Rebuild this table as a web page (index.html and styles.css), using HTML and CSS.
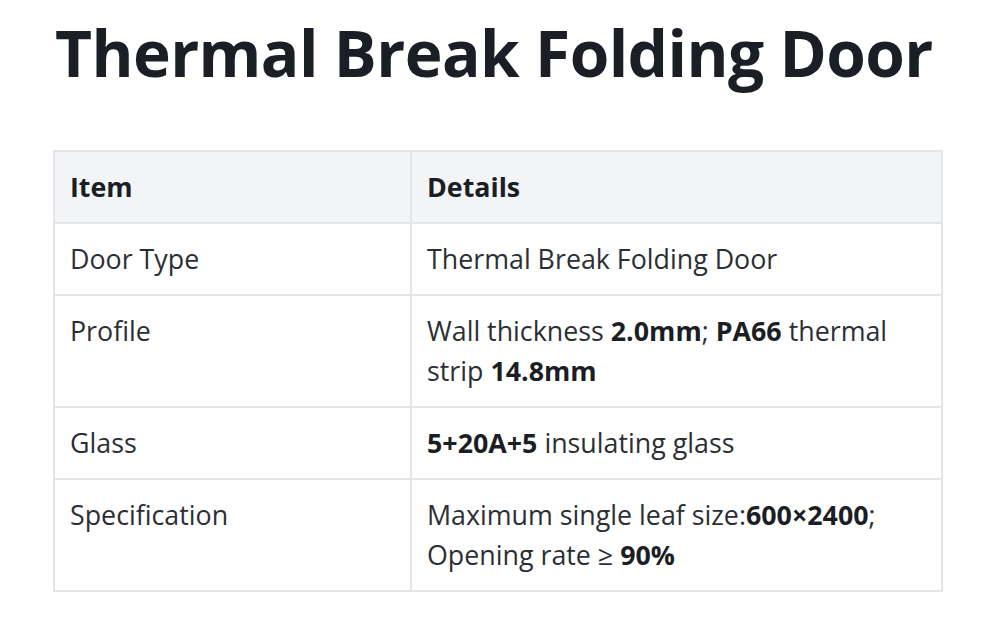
FILE: index.html
```html
<!DOCTYPE html>
<html lang="en">
<head>
<meta charset="utf-8">
<title>Thermal Break Folding Door</title>
<link rel="stylesheet" href="styles.css">
</head>
<body>
<main class="page">
  <h1 class="title">Thermal Break Folding Door</h1>
  <table class="spec">
    <thead>
      <tr><th class="col-item">Item</th><th>Details</th></tr>
    </thead>
    <tbody>
      <tr><td>Door Type</td><td>Thermal Break Folding Door</td></tr>
      <tr><td>Profile</td><td>Wall thickness <strong>2.0mm</strong>; <strong>PA66</strong> thermal strip <strong>14.8mm</strong></td></tr>
      <tr><td>Glass</td><td><strong>5+20A+5</strong> insulating glass</td></tr>
      <tr><td>Specification</td><td>Maximum single leaf size:<strong>600×2400</strong>; Opening rate ≥ <strong>90%</strong></td></tr>
    </tbody>
  </table>
</main>
</body>
</html>
```
FILE: styles.css
```css
html, body { margin: 0; padding: 0; background: #ffffff; }
body { font-family: "Open Sans", "Noto Sans", sans-serif; color: #1f2329; }
.page { padding: 15px 56px 0 53px; }
.title { margin: 0 0 59px 2px; font-size: 64px; line-height: 76px; font-weight: 700; color: #1b1f25; letter-spacing: -0.6px; white-space: nowrap; }
.spec { border-collapse: collapse; width: 890px; font-size: 26.8px; line-height: 40px; }
.spec th, .spec td { border: 2px solid #e3e5e8; padding: 15px 15px; text-align: left; vertical-align: top; font-weight: 400; color: #2b2f35; }
.spec th { background: #f3f4f6; font-weight: 700; color: #1b1f25; }
.col-item { width: 325px; }
.spec strong { font-weight: 700; color: #1b1f25; }
```
